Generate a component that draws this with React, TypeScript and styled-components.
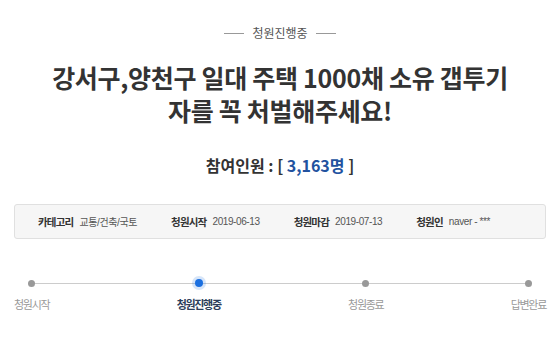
import { FC } from "react";
import styled, { createGlobalStyle } from "styled-components";

const GlobalStyle = createGlobalStyle`
	html, body {
		margin: 0;
		padding: 0;
		background: #fff;
	}

	body {
		font-family: "Noto Sans CJK KR", "Noto Sans", sans-serif;
		color: #333;
	}
`;

interface IInfoItem {
	label: string;
	value: string;
}

interface IStep {
	label: string;
	active?: boolean;
}

const infoItems: IInfoItem[] = [
	{ label: "카테고리", value: "교통/건축/국토" },
	{ label: "청원시작", value: "2019-06-13" },
	{ label: "청원마감", value: "2019-07-13" },
	{ label: "청원인", value: "naver - ***" },
];

const steps: IStep[] = [
	{ label: "청원시작" },
	{ label: "청원진행중", active: true },
	{ label: "청원종료" },
	{ label: "답변완료" },
];

const App: FC = () => {
	return (
		<Page>
			<GlobalStyle />

			<Status>
				<StatusLine />
				<span>청원진행중</span>
				<StatusLine />
			</Status>

			<Title>
				강서구,양천구 일대 주택 1000채 소유 갭투기
				<br />
				자를 꼭 처벌해주세요!
			</Title>

			<Count>
				참여인원 : [ <CountNumber>3,163명</CountNumber> ]
			</Count>

			<InfoBox>
				{infoItems.map((item) => (
					<InfoItem key={item.label}>
						<InfoLabel>{item.label}</InfoLabel>
						<InfoValue>{item.value}</InfoValue>
					</InfoItem>
				))}
			</InfoBox>

			<Progress>
				<ProgressTrack />
				{steps.map((step) => (
					<Step key={step.label}>
						<Dot $active={step.active} />
						<StepLabel $active={step.active}>{step.label}</StepLabel>
					</Step>
				))}
			</Progress>
		</Page>
	);
};

export default App;

const Page = styled.div`
	width: 560px;
	height: 337px;
	padding-top: 24px;
	box-sizing: border-box;
	overflow: hidden;
`;

const Status = styled.div`
	display: flex;
	align-items: center;
	justify-content: center;
	gap: 8px;
	font-size: 12px;
	line-height: 18px;
	color: #555;
`;

const StatusLine = styled.i`
	display: block;
	width: 20px;
	height: 1px;
	background: #999;
`;

const Title = styled.h1`
	margin: 19px 0 0;
	font-size: 25px;
	line-height: 33px;
	font-weight: 700;
	text-align: center;
	color: #333;
	letter-spacing: -0.3px;
`;

const Count = styled.p`
	margin: 27px 0 0;
	font-size: 16px;
	line-height: 22px;
	font-weight: 700;
	text-align: center;
	color: #333;
`;

const CountNumber = styled.span`
	color: #22529f;
`;

const InfoBox = styled.div`
	display: flex;
	align-items: center;
	gap: 34px;
	height: 35px;
	margin: 28px 14px 0;
	padding: 0 23px;
	box-sizing: border-box;
	background: #f6f6f6;
	border: 1px solid #e0e0e0;
	border-radius: 3px;
`;

const InfoItem = styled.div`
	display: flex;
	align-items: center;
	gap: 6px;
	font-size: 10.5px;
	letter-spacing: -0.8px;
`;

const InfoLabel = styled.strong`
	font-weight: 700;
	color: #333;
`;

const InfoValue = styled.span`
	font-family: "Liberation Sans", "Noto Sans CJK KR", sans-serif;
	font-size: 10px;
	letter-spacing: -0.4px;
	color: #555;
`;

const Progress = styled.div`
	position: relative;
	display: flex;
	justify-content: space-between;
	margin: 40px 14px 0;
`;

const ProgressTrack = styled.div`
	position: absolute;
	top: 4px;
	left: 18px;
	right: 19px;
	height: 1px;
	background: #ccc;
`;

const Step = styled.div`
	position: relative;
	display: flex;
	flex-direction: column;
	align-items: center;
	gap: 9px;
`;

const Dot = styled.span<{ $active?: boolean }>`
	display: block;
	width: ${({ $active }) => ($active ? "8px" : "7px")};
	height: ${({ $active }) => ($active ? "8px" : "7px")};
	margin-top: ${({ $active }) => ($active ? "0" : "1px")};
	border-radius: 50%;
	background: ${({ $active }) => ($active ? "#1a6fe0" : "#999")};
	box-shadow: ${({ $active }) => ($active ? "0 0 0 3px rgba(26, 111, 224, 0.18)" : "none")};
`;

const StepLabel = styled.span<{ $active?: boolean }>`
	font-size: 11px;
	line-height: 16px;
	letter-spacing: -1.3px;
	font-weight: ${({ $active }) => ($active ? 700 : 400)};
	color: ${({ $active }) => ($active ? "#2c3e5a" : "#999")};
`;
